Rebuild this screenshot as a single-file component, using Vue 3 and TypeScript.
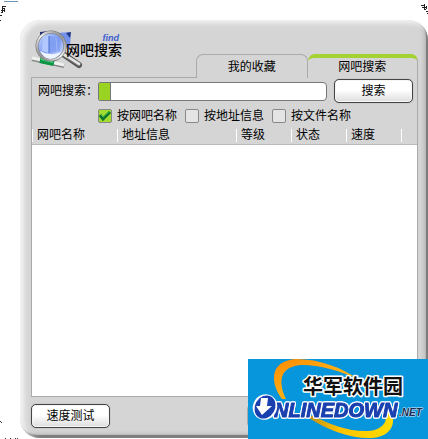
<script setup lang="ts">
import { ref } from 'vue'

const tabs = ['我的收藏', '网吧搜索']
const activeTab = ref('网吧搜索')
const keyword = ref('')
const filters = ref([
  { label: '按网吧名称', checked: true },
  { label: '按地址信息', checked: false },
  { label: '按文件名称', checked: false },
])
const columns = [
  { key: 'name', label: '网吧名称' },
  { key: 'address', label: '地址信息' },
  { key: 'level', label: '等级' },
  { key: 'state', label: '状态' },
  { key: 'speed', label: '速度' },
  { key: 'rest', label: '' },
]
</script>

<template>
  <div class="desktop">
    <svg class="scrap scrap-left" width="20" height="24" viewBox="0 0 20 24" aria-hidden="true">
      <path d="M4 1.5H18" stroke="#6c94b4" />
      <path d="M2 6.5H6M2 8.5H5M1 10.5H5M1 12.5H3M0 15.5H2M0 20.5H1M2.5 6V12M4.5 9V12" stroke="#222" />
    </svg>
    <svg class="scrap scrap-right" width="8" height="16" viewBox="0 0 8 16" aria-hidden="true">
      <path d="M1 5.5H4M2 7.5H7M4.5 4V10M6.5 6V9M6 11.5H8M5 9.5H6M7 13.5H8" stroke="#222" />
    </svg>
    <svg class="scrap scrap-bottom" width="20" height="20" viewBox="0 0 20 20" aria-hidden="true">
      <path d="M0 2.5H1M1 3.5H2M5 19.5H6M10 19.5H11M15 19.5H16M17 19.5H18" stroke="#333" />
    </svg>

    <main class="window">
      <header class="header">
        <div class="brand">
          <svg class="logo" width="52" height="40" viewBox="0 0 52 40" aria-hidden="true">
            <defs>
              <linearGradient id="lens" x1="0" y1="0" x2="1" y2="1">
                <stop offset="0" stop-color="#cbdcff" />
                <stop offset=".5" stop-color="#7d9cf2" />
                <stop offset="1" stop-color="#e2edff" />
              </linearGradient>
              <linearGradient id="steel" x1="0" y1="1" x2="1" y2="0">
                <stop offset="0" stop-color="#777" />
                <stop offset=".5" stop-color="#f4f4f4" />
                <stop offset="1" stop-color="#777" />
              </linearGradient>
            </defs>
            <path d="M9 3 18 2 20 10 9 13Z" fill="#1d2f78" />
            <path d="M26 4 40 3 39 17 31 21 26 17Z" fill="#7292ec" />
            <path d="M35 4 40 3 39 9Z" fill="#24377f" />
            <path d="M1 30 33 37" stroke="#888" stroke-width="4" />
            <path d="M1 29 33 36" stroke="#eef2ee" stroke-width="3" />
            <path d="M9 31 23 34" stroke="#0b9445" stroke-width="6" />
            <path d="M10 30 22 33" stroke="#3fd97c" stroke-width="2" />
            <path d="M32 25 48 36" stroke="#555" stroke-width="6" stroke-linecap="round" />
            <path d="M32 25 48 35" stroke="#e6e6e6" stroke-width="3" stroke-linecap="round" />
            <path d="M36 29 48 37" stroke="#888" />
            <circle cx="20" cy="17" r="14" fill="url(#lens)" stroke="#777" stroke-width="3" />
            <path d="M12 7 18 6 18 24 11 22Z" fill="#b2c8ff" />
            <path d="M18 7 30 9 29 22 18 24Z" fill="#7f9df0" opacity=".8" />
            <path d="M18 7V24" stroke="#456acb" />
            <path d="M25 9 26 22" stroke="#9db6f8" />
            <path d="M9 22Q19 28 30 23Q26 30 19 30Q12 29 9 22Z" fill="#eef5ff" />
            <circle cx="20" cy="17" r="14" fill="none" stroke="url(#steel)" stroke-width="2" />
          </svg>
          <div class="brand-text">
            <span class="find">find</span>
            <h1>网吧搜索</h1>
          </div>
        </div>
        <nav class="tabs">
          <button
            v-for="tab in tabs"
            :key="tab"
            type="button"
            class="tab"
            :class="{ active: activeTab === tab }"
            @click="activeTab = tab"
          >{{ tab }}</button>
        </nav>
      </header>

      <section class="panel">
        <form class="search" @submit.prevent>
          <label class="search-label" for="keyword">网吧搜索：</label>
          <div class="field">
            <span class="marker"></span>
            <input id="keyword" v-model="keyword" type="text" />
          </div>
          <button type="submit" class="btn">搜索</button>
        </form>
        <div class="filters">
          <label v-for="filter in filters" :key="filter.label" class="filter">
            <span class="box">
              <input v-model="filter.checked" type="checkbox" />
              <svg v-if="filter.checked" class="tick" width="14" height="14" viewBox="0 0 14 14" aria-hidden="true">
                <path d="M2 6 5 10 12 3" fill="none" stroke="#13752b" stroke-width="3" />
                <path d="M3 6 5 8 11 3" fill="none" stroke="#38b84a" />
              </svg>
            </span>
            {{ filter.label }}
          </label>
        </div>
        <div class="results">
          <table>
            <colgroup>
              <col v-for="column in columns" :key="column.key" :class="column.key" />
            </colgroup>
            <thead>
              <tr>
                <th v-for="column in columns" :key="column.key">{{ column.label }}</th>
              </tr>
            </thead>
          </table>
        </div>
      </section>

      <footer class="footer">
        <button type="button" class="btn">速度测试</button>
        <button type="button" class="btn plain" aria-hidden="true" tabindex="-1"></button>
      </footer>
    </main>

    <svg class="sponsor" width="180" height="80" viewBox="0 0 180 80" role="img">
      <defs>
        <linearGradient id="orbit" x1="0" y1="0" x2="1" y2="1">
          <stop offset="0" stop-color="#ff8a00" />
          <stop offset=".5" stop-color="#ffae12" />
          <stop offset="1" stop-color="#ffb000" />
        </linearGradient>
        <linearGradient id="orbit-low" x1="0" y1="0" x2="1" y2="0">
          <stop offset="0" stop-color="#b98b16" />
          <stop offset=".4" stop-color="#ffc400" />
          <stop offset="1" stop-color="#ffdc00" />
        </linearGradient>
      </defs>
      <rect width="180" height="80" fill="#0795dc" />
      <path
        d="M34 40C22 24 21 2 48 0C72 0 94 9 110 20C92 12 72 6 54 6C33 7 29 21 38 40Z"
        fill="url(#orbit)"
      />
      <path
        d="M58 57C78 71 103 80 124 79C148 77 150 58 138 43L133 45C144 60 136 71 120 72C103 73 82 66 66 57Z"
        fill="url(#orbit-low)"
      />
      <text class="sponsor-cn" x="55" y="35">华军软件园</text>
      <text class="sponsor-en" x="26" y="58">NLINEDOWN</text>
      <text class="sponsor-net" x="151" y="57">.NET</text>
      <ellipse cx="17" cy="48" rx="12" ry="13" fill="#fff" transform="rotate(30 17 48)" />
      <ellipse cx="17" cy="48" rx="10" ry="12" fill="#1a3fae" transform="rotate(30 17 48)" />
      <path d="M13 39 20 39 19 47 24 47 14 56 8 47 12 47Z" fill="#fff" />
    </svg>
  </div>
</template>

<style>
body {
  background: #fff;
}
</style>

<style scoped>
* {
  box-sizing: border-box;
}

.desktop {
  position: relative;
  display: flex;
  min-height: 100vh;
  padding: 20px 0 1px 20px;
  overflow: hidden;
  color: #000;
  font: 12px/16px "Liberation Sans", "Noto Sans CJK SC", sans-serif;
}

.scrap {
  position: absolute;
}

.scrap-left {
  top: 0;
  left: 0;
}

.scrap-right {
  top: 0;
  right: 0;
}

.scrap-bottom {
  bottom: 0;
  left: 0;
}

.window {
  display: flex;
  flex: 1;
  flex-direction: column;
  min-width: 0;
  padding: 8px 10px 10px 11px;
  border-radius: 20px 20px 14px 20px;
  background: #d5d5d5;
  box-shadow:
    inset 4px 3px 5px #f4f4f4,
    inset -2px -3px 1px #777,
    inset -4px -4px 4px #b8b8b8;
}

.header {
  display: flex;
  align-items: flex-end;
  height: 50px;
}

.brand {
  display: flex;
  flex: 1;
  align-self: stretch;
  min-width: 0;
  border-bottom: 1px solid #aaa;
}

.logo {
  flex: none;
  margin-top: 1px;
}

.brand-text {
  margin-left: -17px;
  padding-top: 6px;
}

.find {
  display: block;
  padding-right: 3px;
  color: #3e5fd0;
  font: italic bold 9px/9px "Liberation Sans", sans-serif;
  text-align: right;
}

h1 {
  margin: 0;
  font-size: 14px;
  font-weight: 500;
  line-height: 14px;
}

.tabs {
  display: flex;
  flex: 0 0 222px;
}

.tab {
  flex: 1;
  height: 24px;
  padding: 0;
  border: 1px solid #aaa;
  border-bottom: 0;
  border-radius: 7px 7px 0 0;
  background: #d5d5d5;
  color: #000;
  font: inherit;
}

.tab.active {
  padding-bottom: 3px;
  border-top: 4px solid #a4d233;
  border-left: 0;
}

.panel {
  display: flex;
  flex: 1;
  flex-direction: column;
  border: 1px solid #aaa;
  border-top: 0;
}

.search {
  display: flex;
  align-items: center;
  padding: 1px 4px 0 6px;
}

.search-label {
  width: 60px;
  white-space: nowrap;
}

.field {
  display: flex;
  flex: 1;
  height: 19px;
  margin-right: 7px;
  overflow: hidden;
  border: 1px solid #777;
  border-radius: 2px 4px 4px 2px;
  background: #fff;
}

.marker {
  width: 12px;
  border-right: 1px solid #777;
  background: #9bd322;
}

.field input {
  flex: 1;
  min-width: 0;
  padding: 0 4px;
  border: 0;
  outline: 0;
  background: transparent;
  font: inherit;
}

.btn {
  width: 79px;
  height: 24px;
  padding: 0;
  border: 1px solid #444;
  border-radius: 5px;
  background: linear-gradient(#fff 45%, #ddd);
  box-shadow: inset 0 0 0 1px #f6f6f6, 0 0 1px #777;
  color: #000;
  font: inherit;
}

.btn.plain {
  border-color: #aaa;
  box-shadow: none;
}

.filters {
  display: flex;
  gap: 8px;
  padding: 5px 0 3px 66px;
}

.filter {
  display: flex;
  align-items: center;
  gap: 5px;
  white-space: nowrap;
}

.box {
  position: relative;
  display: flex;
}

.box input {
  width: 14px;
  height: 14px;
  margin: 0;
  border: 1px solid #888;
  border-radius: 2px;
  appearance: none;
  background: #e4e4e4;
}

.box input:checked {
  background: #a2dc30;
}

.tick {
  position: absolute;
  top: 0;
  left: 0;
  pointer-events: none;
}

.results {
  flex: 1;
  min-height: 80px;
  background: #fff;
}

table {
  width: 100%;
  border-collapse: collapse;
  table-layout: fixed;
  background: #d5d5d5;
}

.name {
  width: 85px;
}

.address {
  width: 119px;
}

.level,
.state,
.speed {
  width: 55px;
}

th {
  position: relative;
  height: 17px;
  padding: 0 0 0 5px;
  border-bottom: 1px solid #bbb;
  font-weight: 400;
  line-height: 16px;
  text-align: left;
  white-space: nowrap;
}

th::before {
  position: absolute;
  top: 2px;
  bottom: 2px;
  left: 0;
  border-left: 1px solid #fff;
  content: "";
}

.footer {
  display: flex;
  justify-content: space-between;
  padding: 7px 92px 0 0;
}

.sponsor {
  position: absolute;
  right: 0;
  bottom: 0;
}

.sponsor text {
  stroke-linejoin: round;
  paint-order: stroke;
}

.sponsor-cn {
  fill: #111;
  stroke: #fff;
  stroke-width: 3px;
  font: bold 20px "Noto Sans CJK SC", sans-serif;
}

.sponsor-en {
  fill: #1a3fae;
  stroke: #1a3fae;
  stroke-width: 1px;
  font: italic bold 20px "Liberation Sans", sans-serif;
  filter:
    drop-shadow(1px 0 0 #fff)
    drop-shadow(-1px 0 0 #fff)
    drop-shadow(0 1px 0 #fff)
    drop-shadow(0 -1px 0 #fff);
}

.sponsor-net {
  fill: #1c2c50;
  stroke: #d9f1ff;
  stroke-width: 1px;
  font: italic bold 10px "Liberation Sans", sans-serif;
}
</style>
